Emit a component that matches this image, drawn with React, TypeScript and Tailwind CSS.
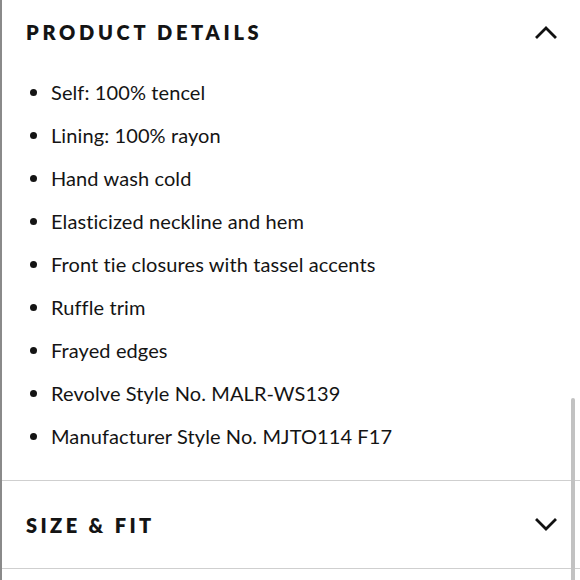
import React from 'react';

const details = [
  'Self: 100% tencel',
  'Lining: 100% rayon',
  'Hand wash cold',
  'Elasticized neckline and hem',
  'Front tie closures with tassel accents',
  'Ruffle trim',
  'Frayed edges',
  'Revolve Style No. MALR-WS139',
  'Manufacturer Style No. MJTO114 F17',
];

const Chevron: React.FC<{ up?: boolean }> = ({ up }) => (
  <svg width="24" height="16" viewBox="0 0 24 16" fill="none" stroke="#111" strokeWidth="2.8" strokeLinecap="square">
    {up ? <path d="M3 13 L12 4 L21 13" /> : <path d="M3 3 L12 12 L21 3" />}
  </svg>
);

export default function App() {
  return (
    <div className="relative h-[580px] w-[580px] overflow-hidden bg-white border-l-2 border-[#8a8a8a] text-[#141414]" style={{ fontFamily: 'Lato, "Liberation Sans", sans-serif' }}>
      <div className="border-b border-[#cfcfcf]">
        <div className="flex h-[64px] items-center justify-between pl-[24px] pr-[22px]">
          <h2 className="text-[20px] font-extrabold tracking-[0.185em]">PRODUCT DETAILS</h2>
          <Chevron up />
        </div>
        <ul className="pt-[6px] pb-[23px] pl-[28px]">
          {details.map(d => (
            <li key={d} className="flex h-[43px] items-center text-[20px] tracking-[0.005em]">
              <span className="mr-[14px] mt-[2px] h-[7px] w-[7px] rounded-full bg-[#141414]" />
              {d}
            </li>
          ))}
        </ul>
      </div>
      <div className="flex h-[88px] items-center justify-between border-b border-[#cfcfcf] pl-[24px] pr-[22px]">
        <h2 className="text-[20px] font-extrabold tracking-[0.17em]">SIZE &amp; FIT</h2>
        <Chevron />
      </div>
      <div className="absolute right-[5px] top-[398px] h-[200px] w-[4px] rounded-full bg-[#c2c2c2]" />
    </div>
  );
}
